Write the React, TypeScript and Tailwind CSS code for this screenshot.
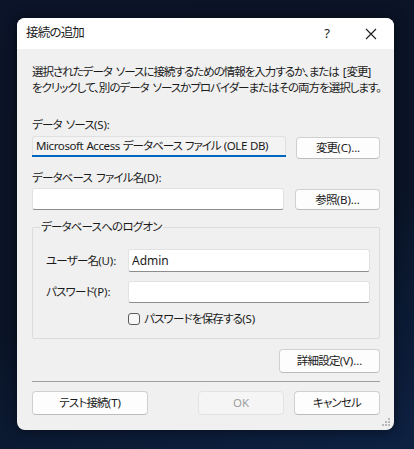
import React from "react";

const font = "font-['Noto_Sans','Noto_Sans_CJK_JP',sans-serif] [font-feature-settings:'palt']";

function J({ t, tight = false, narrow = false }: { t: string; tight?: boolean; narrow?: boolean }) {
  const parts = t.split(/( +|[\x21-\x7e]+)/);
  return (
    <>
      {parts.map((p, i) =>
        p === "" ? null : /^ +$/.test(p) ? (
          <span key={i} className={narrow ? "inline-block w-[3px]" : "inline-block w-[4px]"} />
        ) : /^[\x21-\x7e]+$/.test(p) ? (
          <span key={i} className={narrow ? "tracking-[-0.4px]" : "tracking-[-0.1px]"}>{p}</span>
        ) : (
          <span key={i} className={tight ? "tracking-[-1px]" : "tracking-[-0.8px]"}>{p}</span>
        )
      )}
    </>
  );
}

function Btn({ children, className = "", disabled = false }: { children: React.ReactNode; className?: string; disabled?: boolean }) {
  return (
    <div
      className={
        "flex items-center justify-center rounded-[4px] border text-[11.5px] leading-none whitespace-nowrap " +
        (disabled
          ? "border-[#e3e3e3] bg-[#f5f5f5] text-[#9d9d9d] "
          : "border-[#d0d0d0] border-b-[#bcbcbc] bg-[#fdfdfd] text-[#1b1b1b] ") +
        className
      }
    >
      {children}
    </div>
  );
}

function Input({ children, className = "" }: { children?: React.ReactNode; className?: string }) {
  return (
    <div
      className={
        "flex items-center rounded-[3px] border border-[#e2e2e2] border-b-[#8d8d8d] bg-white pl-[2px] text-[12px] text-[#1b1b1b] " +
        className
      }
    >
      {children}
    </div>
  );
}

export default function App() {
  return (
    <div className={"w-[414px] h-[449px] overflow-hidden bg-[linear-gradient(160deg,#0b1428_0%,#0a1426_55%,#0d2142_100%)] pl-[17px] pt-[18px] " + font}>
      <div className="w-[377px] h-[412px] rounded-[8px] overflow-hidden bg-[#f0f0f0] flex flex-col shadow-[0_0_12px_rgba(0,0,0,0.5)]">
        {/* Title bar */}
        <div className="h-[31px] bg-white flex items-center pl-[9px] shrink-0">
          <span className="text-[12.5px] text-[#1b1b1b] leading-none"><J t="接続の追加" /></span>
          <span className="ml-auto text-[13px] text-[#1b1b1b] leading-none w-[16px] text-center mr-[30px]">?</span>
          <svg width="12" height="12" viewBox="0 0 12 12" className="mr-[17px]">
            <path d="M1 1L11 11M11 1L1 11" stroke="#1b1b1b" strokeWidth="1.1" />
          </svg>
        </div>

        {/* Content */}
        <div className="relative flex-1 pl-[15px] pr-[14px] pt-[15px] text-[11.5px] text-[#1b1b1b] leading-[16px]">
          <div className="whitespace-nowrap"><J tight t="選択されたデータ ソースに接続するための情報を入力するか、または [変更]" /></div>
          <div className="whitespace-nowrap"><J tight t="をクリックして、別のデータ ソースかプロバイダーまたはその両方を選択します。" /></div>

          <div className="mt-[21px]"><J t="データ ソース(S):" /></div>
          <div className="mt-[3px] flex items-start">
            <div className="w-[254px] h-[21px] rounded-t-[3px] border border-[#e0e0e0] border-b-0 bg-[#f3f3f3] flex flex-col">
              <div className="flex-1 flex items-center pl-[3px] text-[11.5px] whitespace-nowrap overflow-hidden">
                <J tight narrow t="Microsoft Access データベース ファイル (OLE DB)" />
              </div>
              <div className="h-[2px] bg-[#0067c0] -mx-[1px]" />
            </div>
            <Btn className="ml-auto mt-[1px] w-[84px] h-[22px]"><J t="変更(C)..." /></Btn>
          </div>

          <div className="mt-[11px]"><J t="データベース ファイル名(D):" /></div>
          <div className="mt-[2px] flex items-start">
            <Input className="w-[252px] h-[22px]" />
            <Btn className="ml-auto mt-[1px] w-[85px] h-[21px]"><J t="参照(B)..." /></Btn>
          </div>

          {/* Group box */}
          <div className="relative mt-[17px] h-[112px] rounded-[2px] border border-[#dcdcdc] pl-[12px] pr-[9px] pt-[21px]">
            <div className="absolute left-[7px] -top-[9px] bg-[#f0f0f0] px-[1px] leading-[16px]"><J t="データベースへのログオン" /></div>
            <div className="flex items-center">
              <div className="w-[83px] pl-[1px]"><J t="ユーザー名(U):" /></div>
              <Input className="flex-1 h-[23px] pl-[3px]">Admin</Input>
            </div>
            <div className="mt-[9px] flex items-center">
              <div className="w-[83px] pl-[1px]"><J t="パスワード(P):" /></div>
              <Input className="flex-1 h-[22px]" />
            </div>
            <div className="mt-[8px] ml-[83px] flex items-center">
              <div className="w-[12px] h-[12px] rounded-[3px] border border-[#5c5c5c] bg-[#f7f7f7]" />
              <span className="ml-[4px]"><J t="パスワードを保存する(S)" /></span>
            </div>
          </div>

          <div className="mt-[10px] flex justify-end">
            <Btn className="w-[101px] h-[24px]"><J t="詳細設定(V)..." /></Btn>
          </div>

          <div className="mt-[8px] h-[1px] bg-[#a0a0a0]" />

          <div className="mt-[9px] flex items-center">
            <Btn className="w-[116px] h-[24px]"><J t="テスト接続(T)" /></Btn>
            <Btn disabled className="ml-[50px] w-[86px] h-[24px]">OK</Btn>
            <Btn className="ml-auto w-[86px] h-[24px]"><J t="キャンセル" /></Btn>
          </div>

          <svg width="9" height="9" viewBox="0 0 9 9" className="absolute right-[3px] bottom-[3px]">
            <rect x="6" y="0" width="2" height="2" fill="#b8b8b8" />
            <rect x="3" y="3" width="2" height="2" fill="#b8b8b8" />
            <rect x="6" y="3" width="2" height="2" fill="#b8b8b8" />
            <rect x="0" y="6" width="2" height="2" fill="#b8b8b8" />
            <rect x="3" y="6" width="2" height="2" fill="#b8b8b8" />
            <rect x="6" y="6" width="2" height="2" fill="#b8b8b8" />
          </svg>
        </div>
      </div>
    </div>
  );
}
